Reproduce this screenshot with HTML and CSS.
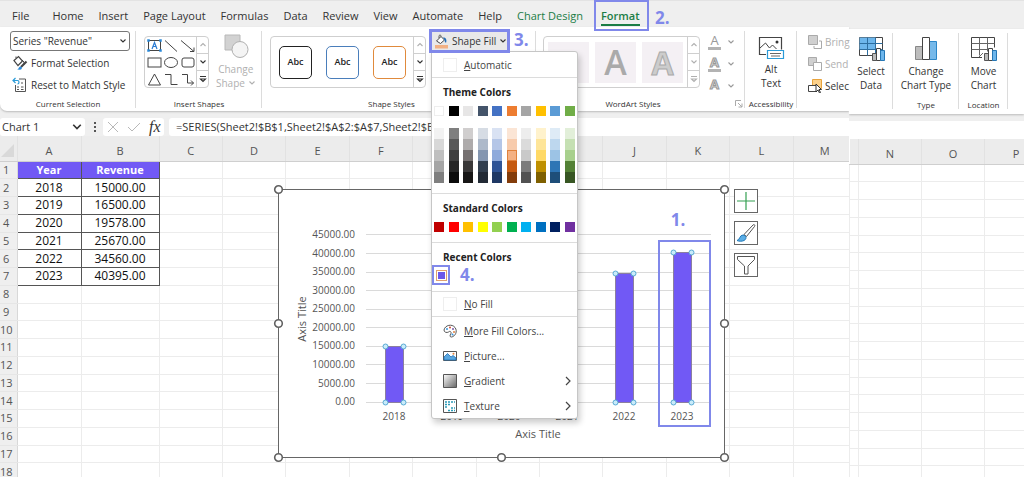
FILE: index.html
```html
<!DOCTYPE html>
<html lang="en">
<head>
<meta charset="utf-8">
<title>Sheet2 - Format chart</title>
<link rel="stylesheet" href="styles.css">
</head>
<body>
<svg width="0" height="0" class="defs" aria-hidden="true">
  <symbol id="down" viewBox="0 0 8 8"><path d="M1.5 2.5 4 5l2.5-2.5" fill="none" stroke="currentColor" stroke-width="1.1"/></symbol>
  <symbol id="up" viewBox="0 0 8 8"><path d="M1.5 5 4 2.5 6.5 5" fill="none" stroke="currentColor" stroke-width="1.1"/></symbol>
  <symbol id="more" viewBox="0 0 8 8"><path d="M1 1.5h6M1.5 4 4 6.5 6.5 4z" fill="none" stroke="currentColor" stroke-width="1.1"/></symbol>
  <symbol id="right" viewBox="0 0 8 12"><path d="M2 2l4 4-4 4" fill="none" stroke="#444" stroke-width="1.2"/></symbol>
</svg>
<div class="app">
  <nav class="tabs">
    <button class="tab tab-file">File</button>
    <button class="tab">Home</button>
    <button class="tab">Insert</button>
    <button class="tab">Page Layout</button>
    <button class="tab">Formulas</button>
    <button class="tab">Data</button>
    <button class="tab">Review</button>
    <button class="tab">View</button>
    <button class="tab">Automate</button>
    <button class="tab">Help</button>
    <button class="tab green">Chart Design</button>
    <button class="tab active"><span class="tab-text">Format</span><span class="step step-2">2.</span></button>
  </nav>
  <main class="panes">
    <section class="pane pane-left">
      <div class="ribbon">
        <div class="group">
          <div class="body selection">
            <label class="series"><select aria-label="Chart element"><option>Series "Revenue"</option></select><svg width="8" height="8"><use href="#down"/></svg></label>
            <button class="command"><svg width="16" height="16" viewBox="0 0 16 16"><path d="M2 5.5 6.5 1.5l4 4.5-4.500 4.500z" fill="#fff" stroke="#444" stroke-width="1.200"/><path d="M4 3V1.500M10 5l2 2v3" fill="none" stroke="#444"/><path d="M14.500 6.500 9 12" stroke="#444" stroke-width="2.200"/><path d="M5 14.500c2 0 1.500-3 3.500-3s2 3-.5 3.300z" fill="#2b88d8"/></svg>Format Selection</button>
            <button class="command"><svg width="16" height="16" viewBox="0 0 16 16"><path d="M7 2h6.500v12.500H3.500V8" fill="#fff" stroke="#555"/><path d="M5 10h2M5 12.500h2M9 6h2M9 10h2.500M9 12.500h2.500" stroke="#555"/><path d="M1 3.500h4.500c2 0 2 3.500 0 3.500M3.500 1 1 3.500 3.500 6" fill="none" stroke="#2b9bd8" stroke-width="1.200"/></svg>Reset to Match Style</button>
          </div>
          <h2 class="caption">Current Selection</h2>
        </div>
        <div class="group">
          <div class="body insert">
            <div class="gallery">
              <svg class="shapes" width="51" height="50" viewBox="0 0 51 50" fill="none" stroke="#444"><rect x="3.500" y="3.500" width="12" height="10" stroke="#444"/><path d="M7 12 9.500 5.500 12 12M8 9.500h3" stroke="#2b7cd3" stroke-width="1.200"/><path d="M2.500 2.500h2v2h-2zM14.500 2.500h2v2h-2zM2.500 12.500h2v2h-2zM14.500 12.500h2v2h-2z" stroke="#2b88d8" fill="#2b88d8" stroke-width=".5"/><path d="M20 3.500 32 14.500M36 3.500 49 14.500M49 10.500v4h-4"/><rect x="3" y="21" width="13" height="9"/><ellipse cx="26" cy="25.500" rx="6.500" ry="5"/><rect x="37" y="21" width="12" height="9" rx="2"/><path d="M9.500 37 15.500 48h-12zM20 37.500h6v10h6.500M37 37.500h5.500v8.500h6M46 43.500l2.500 2.500-2.500 2.500"/></svg>
              <div class="spin"><button class="dim" aria-label="Previous shapes"><svg width="8" height="8"><use href="#up"/></svg></button><button aria-label="Next shapes"><svg width="8" height="8"><use href="#down"/></svg></button><button aria-label="All shapes"><svg width="8" height="8"><use href="#more"/></svg></button></div>
            </div>
            <button class="big dim"><svg width="26" height="26" viewBox="0 0 26 26"><path d="M2 2h15v15H2z" fill="#d2d2d2" stroke="#b8b8b8"/><circle cx="17" cy="16.500" r="8" fill="#f4f4f4" stroke="#b0b0b0"/></svg><span>Change<br>Shape <svg width="8" height="8"><use href="#down"/></svg></span></button>
          </div>
          <h2 class="caption">Insert Shapes</h2>
        </div>
        <div class="group launcher-room">
          <div class="body styles">
            <div class="gallery">
              <div class="presets"><button class="preset">Abc</button><button class="preset blue">Abc</button><button class="preset orange">Abc</button></div>
              <div class="spin"><button class="dim" aria-label="Previous styles"><svg width="8" height="8"><use href="#up"/></svg></button><button aria-label="Next styles"><svg width="8" height="8"><use href="#down"/></svg></button><button aria-label="All styles"><svg width="8" height="8"><use href="#more"/></svg></button></div>
            </div>
            <div class="fill">
              <button class="fill-button"><svg width="15" height="15" viewBox="0 0 15 15"><path d="M2.500 7 7 2.500l3.500 3.500L6.500 9.500z" fill="#fff" stroke="#444"/><path d="M5 4V2.500c0-2 2-2 2 0" fill="none" stroke="#444" stroke-width=".9"/><path d="M9 3.500c3 0 4 2 3 5.500-1.500-1-1.500-3-1.500-3" fill="#2470b8"/><path d="M1 11h13v3.500H1z" fill="#f2b183"/></svg>Shape Fill<svg width="8" height="8"><use href="#down"/></svg></button>
              <span class="step step-3">3.</span>
              <div class="menu">
                <button class="item auto"><i class="blank"></i><span><u>A</u>utomatic</span></button>
                <h3>Theme Colors</h3>
                <div class="colors">
                  <i class="white"></i><i style="background:#000"></i><i style="background:#e7e6e6"></i><i style="background:#44546a"></i><i style="background:#4472c4"></i><i style="background:#ed7d31"></i><i style="background:#a5a5a5"></i><i style="background:#ffc000"></i><i style="background:#5b9bd5"></i><i style="background:#70ad47"></i>
                </div>
                <div class="colors tints">
                  <i style="background:#f2f2f2"></i><i style="background:#7f7f7f"></i><i style="background:#d0cece"></i><i style="background:#d6dce4"></i><i style="background:#d9e2f3"></i><i style="background:#fbe5d5"></i><i style="background:#ededed"></i><i style="background:#fff2cc"></i><i style="background:#deebf6"></i><i style="background:#e2efd9"></i>
                  <i style="background:#d8d8d8"></i><i style="background:#595959"></i><i style="background:#aeabab"></i><i style="background:#adb9ca"></i><i style="background:#b4c6e7"></i><i style="background:#f7cbac"></i><i style="background:#dbdbdb"></i><i style="background:#fee599"></i><i style="background:#bdd7ee"></i><i style="background:#c5e0b3"></i>
                  <i style="background:#bfbfbf"></i><i style="background:#3f3f3f"></i><i style="background:#757070"></i><i style="background:#8496b0"></i><i style="background:#8eaadb"></i><i class="picked" style="background:#f4b183"></i><i style="background:#c9c9c9"></i><i style="background:#ffd965"></i><i style="background:#9cc3e5"></i><i style="background:#a8d08d"></i>
                  <i style="background:#a5a5a5"></i><i style="background:#262626"></i><i style="background:#3a3838"></i><i style="background:#323f4f"></i><i style="background:#2f5496"></i><i style="background:#c55a11"></i><i style="background:#7b7b7b"></i><i style="background:#bf9000"></i><i style="background:#2e75b5"></i><i style="background:#538135"></i>
                  <i style="background:#7f7f7f"></i><i style="background:#0c0c0c"></i><i style="background:#171616"></i><i style="background:#222a35"></i><i style="background:#1f3864"></i><i style="background:#833c0b"></i><i style="background:#525252"></i><i style="background:#7f6000"></i><i style="background:#1e4e79"></i><i style="background:#375623"></i>
                </div>
                <h3 class="ruled">Standard Colors</h3>
                <div class="colors">
                  <i style="background:#c00000"></i><i style="background:#f00"></i><i style="background:#ffc000"></i><i style="background:#ff0"></i><i style="background:#92d050"></i><i style="background:#00b050"></i><i style="background:#00b0f0"></i><i style="background:#0070c0"></i><i style="background:#002060"></i><i style="background:#7030a0"></i>
                </div>
                <h3 class="ruled">Recent Colors</h3>
                <div class="recent"><button class="recent-color" aria-label="Purple"><i></i></button><span class="step">4.</span></div>
                <button class="item none"><i class="blank"></i><span><u>N</u>o Fill</span></button>
                <div class="choices">
                  <button class="item"><svg width="14" height="14" viewBox="0 0 14 14"><path d="M1 6c1-5 8-6.500 11-2.500 3 4 0 9-3.500 9.500-2 .2-1.500-2-.8-3C9 8 7 6.500 5.500 8 4 9 1 8.500 1 6z" fill="#fff" stroke="#555"/><circle cx="4" cy="5" r="1" fill="#3a96dd"/><circle cx="7" cy="3.500" r="1" fill="#d04a3a"/><circle cx="10" cy="5" r="1" fill="#7a58a8"/><circle cx="11" cy="8" r="1" fill="#e08040"/><circle cx="9.500" cy="10.500" r="1" fill="#3a96dd"/></svg><span><u>M</u>ore Fill Colors...</span></button>
                  <button class="item"><svg width="14" height="14" viewBox="0 0 14 14"><path d="M.5 2.500h13v9H.5z" fill="#fff" stroke="#555"/><path d="M1 11V8l3.500-3.500L8 8l2-1.500 3 2.500v2z" fill="#5aa7e0" stroke="#1f6fb5" stroke-width=".8"/><circle cx="10.500" cy="4.800" r="1" fill="#e8833a"/></svg><span><u>P</u>icture...</span></button>
                  <button class="item"><svg width="14" height="14" viewBox="0 0 14 14"><defs><linearGradient id="grey" x2="1" y2="1"><stop stop-color="#fff"/><stop offset="1" stop-color="#666"/></linearGradient></defs><path d="M.5.5h13v13H.5z" fill="url(#grey)" stroke="#555"/></svg><span><u>G</u>radient</span><svg class="open" width="8" height="12"><use href="#right"/></svg></button>
                  <button class="item"><svg width="14" height="14" viewBox="0 0 14 14"><path d="M.5.5h13v13H.5z" fill="#fff" stroke="#555"/><path d="M2 3h10M2 5.500h5M2 8h3M5 11.500h7M8 9h4" stroke="#2b9bb8" stroke-width="1.500" stroke-dasharray="2 1"/></svg><span><u>T</u>exture</span><svg class="open" width="8" height="12"><use href="#right"/></svg></button>
                </div>
              </div>
            </div>
          </div>
          <h2 class="caption">Shape Styles</h2>
        </div>
        <div class="group launcher-room">
          <div class="body wordart">
            <div class="gallery dim">
              <div class="letters"><button class="letter">A</button><button class="letter solid">A</button><button class="letter outline">A</button></div>
              <div class="spin"><button aria-label="Previous WordArt"><svg width="8" height="8"><use href="#up"/></svg></button><button aria-label="Next WordArt"><svg width="8" height="8"><use href="#down"/></svg></button><button aria-label="All WordArt"><svg width="8" height="8"><use href="#more"/></svg></button></div>
            </div>
            <div class="text-tools">
              <button><b class="plain bar">A</b><svg width="8" height="8"><use href="#down"/></svg></button>
              <button><b class="hollow bar">A</b><svg width="8" height="8"><use href="#down"/></svg></button>
              <button><b class="hollow">A</b><svg width="8" height="8"><use href="#down"/></svg></button>
            </div>
          </div>
          <h2 class="caption">WordArt Styles</h2>
          <svg class="launcher" width="8" height="8" viewBox="0 0 8 8"><path d="M.5 6V.5H6M3 3l4 4M7 3.500V7H3.500" fill="none" stroke="#aaa"/></svg>
        </div>
        <div class="group">
          <div class="body centred">
            <button class="big alt"><svg width="28" height="25" viewBox="0 0 28 25"><path d="M9 19.500H2.500v-17h22v12" fill="#fff" stroke="#444" stroke-width="1.200"/><path d="M3 13 8.500 8l4 5 3-3 4 4" fill="none" stroke="#444"/><circle cx="20" cy="7" r="1.500" fill="#333"/><path d="M10.500 15.500h16v8h-16z" fill="#fff" stroke="#2b9bd8" stroke-width="1.200"/><path d="M13 18.500h11M14 21h9" stroke="#666"/></svg><span>Alt<br>Text</span></button>
          </div>
          <h2 class="caption">Accessibility</h2>
        </div>
        <div class="group">
          <div class="body arrange">
            <button class="command dim"><svg width="14" height="14" viewBox="0 0 14 14"><path d="M.5.500h9v9h-9z" fill="#d0d0d0" stroke="#aaa"/><path d="M11 6h2.500v7.500H6V11" fill="none" stroke="#aaa"/></svg>Bring</button>
            <button class="command dim"><svg width="14" height="14" viewBox="0 0 14 14"><path d="M.5.500h8v8h-8z" fill="#d0d0d0" stroke="#aaa"/><path d="M5.500 5.500h8v8h-8z" fill="#fff" stroke="#aaa"/></svg>Send</button>
            <button class="command"><svg width="14" height="14" viewBox="0 0 14 14"><path d="M4.500.500h9v9h-9z" fill="#fbd08a" stroke="#e8a33d"/><path d="M.5 6.500h8v6h-8z" fill="#fff" stroke="#444"/><path d="M8 5v8l2-2 1.500 3 1-.5-1.500-3h2.500z" fill="#fff" stroke="#333"/></svg>Selec</button>
          </div>
        </div>
      </div>
      <div class="formula-bar">
        <label class="name-box"><select aria-label="Name box"><option>Chart 1</option></select><svg width="12" height="12"><use href="#down"/></svg></label>
        <svg class="dots" width="4" height="12" viewBox="0 0 4 12"><path d="M1 1h2v2H1zM1 5h2v2H1zM1 9h2v2H1z" fill="#555"/></svg>
        <div class="edit-tools"><svg width="12" height="12" viewBox="0 0 12 12"><path d="M1 1l10 10M11 1 1 11" stroke="#b8b8b8"/></svg><svg width="14" height="12" viewBox="0 0 14 12"><path d="M1 6l4 4 8-8" fill="none" stroke="#b8b8b8"/></svg><button class="fx" aria-label="Insert function">fx</button></div>
        <input class="formula" aria-label="Formula" value="=SERIES(Sheet2!$B$1,Sheet2!$A$2:$A$7,Sheet2!$B">
      </div>
      <div class="sheet">
        <table class="cells">
          <colgroup><col class="c-num"><col class="c-a"><col class="c-b"><col span="11"></colgroup>
          <thead><tr><th><svg width="14" height="14" viewBox="0 0 14 14"><path d="M14 0v13H1z" fill="#d9d9d9"/></svg></th><th>A</th><th>B</th><th>C</th><th>D</th><th>E</th><th>F</th><th>G</th><th>H</th><th>I</th><th>J</th><th>K</th><th>L</th><th>M</th></tr></thead>
          <tbody>
            <tr><th>1</th><td class="data head">Year</td><td class="data head">Revenue</td><td></td><td></td><td></td><td></td><td></td><td></td><td></td><td></td><td></td><td></td><td></td></tr>
            <tr><th>2</th><td class="data">2018</td><td class="data">15000.00</td><td></td><td></td><td></td><td></td><td></td><td></td><td></td><td></td><td></td><td></td><td></td></tr>
            <tr><th>3</th><td class="data">2019</td><td class="data">16500.00</td><td></td><td></td><td></td><td></td><td></td><td></td><td></td><td></td><td></td><td></td><td></td></tr>
            <tr><th>4</th><td class="data">2020</td><td class="data">19578.00</td><td></td><td></td><td></td><td></td><td></td><td></td><td></td><td></td><td></td><td></td><td></td></tr>
            <tr><th>5</th><td class="data">2021</td><td class="data">25670.00</td><td></td><td></td><td></td><td></td><td></td><td></td><td></td><td></td><td></td><td></td><td></td></tr>
            <tr><th>6</th><td class="data">2022</td><td class="data">34560.00</td><td></td><td></td><td></td><td></td><td></td><td></td><td></td><td></td><td></td><td></td><td></td></tr>
            <tr><th>7</th><td class="data">2023</td><td class="data">40395.00</td><td></td><td></td><td></td><td></td><td></td><td></td><td></td><td></td><td></td><td></td><td></td></tr>
            <tr><th>8</th><td></td><td></td><td></td><td></td><td></td><td></td><td></td><td></td><td></td><td></td><td></td><td></td><td></td></tr>
            <tr><th>9</th><td></td><td></td><td></td><td></td><td></td><td></td><td></td><td></td><td></td><td></td><td></td><td></td><td></td></tr>
            <tr><th>10</th><td></td><td></td><td></td><td></td><td></td><td></td><td></td><td></td><td></td><td></td><td></td><td></td><td></td></tr>
            <tr><th>11</th><td></td><td></td><td></td><td></td><td></td><td></td><td></td><td></td><td></td><td></td><td></td><td></td><td></td></tr>
            <tr><th>12</th><td></td><td></td><td></td><td></td><td></td><td></td><td></td><td></td><td></td><td></td><td></td><td></td><td></td></tr>
            <tr><th>13</th><td></td><td></td><td></td><td></td><td></td><td></td><td></td><td></td><td></td><td></td><td></td><td></td><td></td></tr>
            <tr><th>14</th><td></td><td></td><td></td><td></td><td></td><td></td><td></td><td></td><td></td><td></td><td></td><td></td><td></td></tr>
            <tr><th>15</th><td></td><td></td><td></td><td></td><td></td><td></td><td></td><td></td><td></td><td></td><td></td><td></td><td></td></tr>
            <tr><th>16</th><td></td><td></td><td></td><td></td><td></td><td></td><td></td><td></td><td></td><td></td><td></td><td></td><td></td></tr>
            <tr><th>17</th><td></td><td></td><td></td><td></td><td></td><td></td><td></td><td></td><td></td><td></td><td></td><td></td><td></td></tr>
            <tr><th>18</th><td></td><td></td><td></td><td></td><td></td><td></td><td></td><td></td><td></td><td></td><td></td><td></td><td></td></tr>
          </tbody>
        </table>
        <div class="chart">
          <svg width="447" height="270" viewBox="0 0 447 270" role="img" aria-label="Revenue by year">
            <rect x=".5" y=".5" width="446" height="268" fill="#fff" stroke="#666"/>
            <path d="M88 45.500h345M88 64.500h345M88 83.500h345M88 101.500h345M88 120.500h345M88 138.500h345M88 157.500h345M88 175.500h345M88 194.500h345M88 213.500h345" stroke="#dadada"/>
            <g class="axis end"><text x="77" y="49">45000.00</text><text x="77" y="68">40000.00</text><text x="77" y="86">35000.00</text><text x="77" y="105">30000.00</text><text x="77" y="123">25000.00</text><text x="77" y="142">20000.00</text><text x="77" y="160">15000.00</text><text x="77" y="179">10000.00</text><text x="77" y="198">5000.00</text><text x="77" y="216">0.00</text></g>
            <g class="axis"><text x="116" y="231">2018</text><text x="174" y="231">2019</text><text x="231" y="231">2020</text><text x="289" y="231">2021</text><text x="346" y="231">2022</text><text x="404" y="231">2023</text></g>
            <g class="axis title"><text x="260" y="249">Axis Title</text><text transform="translate(28 130) rotate(-90)">Axis Title</text></g>
            <g fill="#7159f5" stroke="#8b7f9f"><path d="M107.500 157.500h18v56h-18zM165.500 152.500h18v61h-18zM222.500 140.500h18v73h-18zM280.500 118.500h18v95h-18zM337.500 84.500h18v129h-18zM395.500 63.500h18v150h-18z"/></g>
            <g fill="#c9ebfa" stroke="#4ba3cf" stroke-width=".9"><circle cx="107.500" cy="157.500" r="2.500"/><circle cx="125.500" cy="157.500" r="2.500"/><circle cx="107.500" cy="213.500" r="2.500"/><circle cx="125.500" cy="213.500" r="2.500"/><circle cx="337.500" cy="84.500" r="2.500"/><circle cx="355.500" cy="84.500" r="2.500"/><circle cx="337.500" cy="213.500" r="2.500"/><circle cx="355.500" cy="213.500" r="2.500"/><circle cx="395.500" cy="63.500" r="2.500"/><circle cx="413.500" cy="63.500" r="2.500"/><circle cx="395.500" cy="213.500" r="2.500"/><circle cx="413.500" cy="213.500" r="2.500"/></g>
            <rect x="381" y="52" width="51" height="185" fill="none" stroke="#8088ea" stroke-width="2"/>
            <text class="step-svg" x="400" y="37">1.</text>
            <g fill="#fff" stroke="#606060" stroke-width="1.600"><circle cx=".5" cy=".5" r="3.800"/><circle cx=".5" cy="134.500" r="3.800"/><circle cx=".5" cy="268.500" r="3.800"/><circle cx="223.500" cy=".5" r="3.800"/><circle cx="223.500" cy="268.500" r="3.800"/><circle cx="446.500" cy=".5" r="3.800"/><circle cx="446.500" cy="134.500" r="3.800"/><circle cx="446.500" cy="268.500" r="3.800"/></g>
          </svg>
          <div class="chart-tools">
            <button aria-label="Chart elements"><svg width="22" height="22" viewBox="0 0 22 22"><path d="M11 2v18M2 11h18" stroke="#35a052" stroke-width="1.200"/></svg></button>
            <button aria-label="Chart styles"><svg width="22" height="22" viewBox="0 0 22 22"><path d="M9 12.500 18 3c1-1 2.500 0 1.500 1.500L11.500 14.500z" fill="#fff" stroke="#555"/><path d="M2 18.500c3-.5 2.500-5.500 6-5.500 3.500.5 4 4 1 5.500-2 1-5 1-7 0z" fill="#5baee6" stroke="#1f78b8"/></svg></button>
            <button aria-label="Chart filters"><svg width="22" height="22" viewBox="0 0 22 22"><path d="M2.500 2.500h17v3L13 12v8H9.500v-8L2.500 5.500z" fill="#fff" stroke="#555"/></svg></button>
          </div>
        </div>
      </div>
    </section>
    <section class="pane pane-right">
      <div class="ribbon">
        <div class="group">
          <div class="body centred"><button class="big"><svg width="27" height="26" viewBox="0 0 27 26"><path d="M1.500 1.500h23v18h-23z" fill="#fff" stroke="#444"/><path d="M1.500 1.500h16v12h-16z" fill="#6db6ec"/><path d="M9.500 1.500v18M17.500 1.500v18M1.500 7.500h23M1.500 13.500h23" stroke="#2d6ea0"/><path d="M14.500 17.500h4v7h-4z" fill="#bbb" stroke="#555"/><path d="M18.500 12.500h4v12h-4z" fill="#fff" stroke="#444"/><path d="M22.500 14.500h4v10h-4z" fill="#6db6ec" stroke="#2577b5"/></svg><span>Select<br>Data</span></button></div>
        </div>
        <div class="group">
          <div class="body centred"><button class="big"><svg width="24" height="26" viewBox="0 0 24 26"><path d="M1.500 10.500h7v13h-7z" fill="#bdbdbd" stroke="#888"/><path d="M15.500 5.500h7v18h-7z" fill="#76b9ea" stroke="#2d87c8"/><path d="M8.500 1.500h7v22h-7z" fill="#fff" stroke="#444"/></svg><span>Change<br>Chart Type</span></button></div>
          <h2 class="caption">Type</h2>
        </div>
        <div class="group">
          <div class="body centred"><button class="big"><svg width="27" height="26" viewBox="0 0 27 26"><path d="M12 21.500H1.500v-20h23v10" fill="#fff" stroke="#444"/><path d="M9.500 1.500v18M17.500 1.500v14M1.500 7.500h23M1.500 13.500h17M9 21l4-4" stroke="#666"/><path d="M14.500 17.500h4v7h-4z" fill="#bbb" stroke="#555"/><path d="M18.500 12.500h4v12h-4z" fill="#fff" stroke="#444"/><path d="M22.500 14.500h4v10h-4z" fill="#6db6ec" stroke="#2577b5"/></svg><span>Move<br>Chart</span></button></div>
          <h2 class="caption">Location</h2>
        </div>
      </div>
      <div class="formula-bar"></div>
      <div class="sheet">
        <table class="cells">
          <colgroup><col class="c-edge"><col span="3"></colgroup>
          <thead><tr><th></th><th>N</th><th>O</th><th>P</th></tr></thead>
          <tbody>
            <tr><td></td><td></td><td></td><td></td></tr><tr><td></td><td></td><td></td><td></td></tr><tr><td></td><td></td><td></td><td></td></tr>
            <tr><td></td><td></td><td></td><td></td></tr><tr><td></td><td></td><td></td><td></td></tr><tr><td></td><td></td><td></td><td></td></tr>
            <tr><td></td><td></td><td></td><td></td></tr><tr><td></td><td></td><td></td><td></td></tr><tr><td></td><td></td><td></td><td></td></tr>
            <tr><td></td><td></td><td></td><td></td></tr><tr><td></td><td></td><td></td><td></td></tr><tr><td></td><td></td><td></td><td></td></tr>
            <tr><td></td><td></td><td></td><td></td></tr><tr><td></td><td></td><td></td><td></td></tr><tr><td></td><td></td><td></td><td></td></tr>
            <tr><td></td><td></td><td></td><td></td></tr><tr><td></td><td></td><td></td><td></td></tr><tr><td></td><td></td><td></td><td></td></tr>
          </tbody>
        </table>
      </div>
    </section>
  </main>
</div>
</body>
</html>
```
FILE: styles.css
```css
* { box-sizing: border-box; }
body { margin: 0; background: #fff; color: #333; font: 10px/14px "Open Sans", "Noto Sans", sans-serif; }
button, select, input { margin: 0; padding: 0; border: 0; background: none; color: inherit; font: inherit; }
svg { display: block; flex: none; }
h2, h3 { margin: 0; font-weight: 400; }
.defs { position: absolute; }
.app { height: 100vh; overflow: hidden; display: flex; flex-direction: column; background: #efefef; }

.tabs { display: flex; align-items: center; gap: 15px; height: 27px; flex: none; padding: 3px 12px 0; border-top: 1px solid #e3e3e3; font-size: 11px; }
.tab { white-space: nowrap; }
.tab-file { margin-right: 8px; }
.green { color: #1b7d46; }
.active { position: relative; margin-left: 3px; color: #1b7d46; font-weight: 600; }
.tab-text { display: block; border-bottom: 2px solid #1b7d46; line-height: 17px; margin-top: 2px; }
.active::before { content: ""; position: absolute; inset: -5px -9px -5px -7px; border: 2px solid #8088ea; z-index: 3; }
.step { color: #8088ea; font-size: 17px; font-weight: 700; line-height: 20px; }
.step-2 { position: absolute; left: 54px; top: 3px; z-index: 3; }
.step-3 { position: absolute; left: 85px; top: 1px; }

.panes { flex: 1; min-height: 0; display: grid; grid-template-columns: minmax(0, 849fr) minmax(0, 175fr); }
.pane { display: flex; flex-direction: column; min-width: 0; }
.pane-right { padding-top: 2px; overflow: hidden; }
.ribbon { display: grid; grid-template-columns: 136fr 126fr 274fr 209fr 52fr 52fr; height: 84px; flex: none; background: #fff; border-bottom-left-radius: 7px; box-shadow: 0 1px 2px #bbb; }
.pane-right .ribbon { grid-template-columns: 44fr 66fr 49fr 16fr; height: 85px; border-radius: 0; }
.group { position: relative; display: flex; flex-direction: column; min-width: 0; padding: 4px 0 2px; }
.group::after { content: ""; position: absolute; right: 0; top: 4px; bottom: 5px; border-right: 1px solid #dcdcdc; }
.pane-left .group:last-child::after { display: none; }
.body { flex: 1; min-height: 0; display: flex; }
.caption { font-size: 8px; text-align: center; white-space: nowrap; }
.launcher-room .caption { padding-right: 15px; }
.launcher { position: absolute; right: 2px; bottom: 5px; }
.dim { color: #b0b0b0; }

.selection { flex-direction: column; padding: 0 6px 0 10px; }
.series { position: relative; display: flex; align-items: center; height: 20px; border: 1px solid #777; border-radius: 3px; margin-bottom: 1px; }
.series select, .name-box select { appearance: none; flex: 1; min-width: 0; padding-left: 2px; }
.series svg { margin-right: 2px; }
.command { display: flex; align-items: center; gap: 3px; height: 22px; white-space: nowrap; padding-left: 2px; }
.insert { padding: 5px 8px 0; gap: 7px; }
.gallery { display: flex; height: 52px; border: 1px solid #cfcfcf; border-radius: 4px; }
.spin { display: flex; flex-direction: column; width: 12px; }
.spin button { flex: 1; display: grid; place-items: center; border-left: 1px solid #cfcfcf; }
.spin button + button { border-top: 1px solid #cfcfcf; }
.big { display: flex; flex-direction: column; align-items: center; gap: 2px; height: 60px; line-height: 14px; white-space: nowrap; }
.insert .big { margin-top: -3px; gap: 3px; }
.big span svg { display: inline; }
.styles { padding: 5px 8px 0; }
.presets { display: flex; align-items: center; gap: 14px; padding: 0 7px 0 8px; }
.preset { width: 33px; height: 33px; border: 1px solid #222; border-radius: 5px; font-size: 9px; font-weight: 600; color: #222; }
.blue { border-color: #4a7ebb; }
.orange { border-color: #e08a3c; }
.centred { justify-content: center; padding-top: 4px; }
.pane-right .centred { padding-top: 3px; }
.wordart { padding: 5px 7px 0; gap: 8px; }
.letters { display: flex; align-items: center; gap: 6px; padding: 0 4px; }
.letter { width: 41px; height: 41px; background: #f4f0f4; color: #aaa; font-size: 28px; line-height: 41px; }
.solid { font-weight: 600; font-size: 34px; }
.outline { font-weight: 700; font-size: 32px; color: #ccc; -webkit-text-stroke: 1px #aaa; }
.text-tools { display: flex; flex-direction: column; margin-top: -5px; }
.text-tools button { display: flex; align-items: center; gap: 6px; height: 22px; color: #999; }
.text-tools b { width: 13px; font-size: 13px; line-height: 13px; text-align: center; border-bottom: 3px solid transparent; }
.text-tools .bar { border-bottom-color: #b3b3b3; }
.text-tools .plain { font-weight: 400; }
.hollow { color: #ddd; -webkit-text-stroke: 1px #999; }
.arrange { flex-direction: column; padding: 0 0 0 9px; }

.fill { position: relative; z-index: 4; margin: -7px 0 0 3px; height: 24px; }
.fill-button { display: flex; align-items: center; gap: 3px; width: 81px; height: 24px; padding: 0 2px; border: 3px solid #8088ea; background: #e9e9e9; white-space: nowrap; }
.menu { position: absolute; left: 2px; top: 22px; width: 147px; z-index: -1; background: #fff; border: 1px solid #c6c6c6; border-radius: 0 3px 3px 3px; box-shadow: 2px 4px 6px #0003; }
.item { display: flex; align-items: center; gap: 7px; width: 100%; height: 25px; padding: 0 5px 0 11px; text-align: left; color: #444; }
.auto { height: 26px; border-bottom: 1px solid #dcdcdc; }
.blank { width: 14px; height: 14px; border: 1px solid #eee; }
.open { margin-left: auto; }
.menu h3 { padding: 7px 11px 0; font-size: 10px; font-weight: 700; line-height: 15px; color: #222; }
.menu .ruled { margin-top: 10px; border-top: 1px solid #dcdcdc; }
.colors { display: grid; grid-template-columns: repeat(10, 1fr); justify-items: center; padding-top: 6px; }
.colors i { width: 10px; height: 10px; }
.white { border: 1px solid #eee; }
.tints { padding-top: 12px; }
.tints i { height: 11px; }
.tints .picked { outline: 1px solid #e0823c; outline-offset: -1px; }
.recent { display: flex; gap: 10px; height: 26px; }
.recent-color { width: 18px; height: 20px; border: 2px solid #8088ea; display: grid; place-items: center; }
.recent-color i { width: 11px; height: 11px; background: #6b57ea; border: 1px solid #e0a070; box-shadow: inset 0 0 0 1px #fff; }
.none { border-top: 1px solid #dcdcdc; }
.choices { border-top: 1px solid #dcdcdc; padding-top: 1px; }

.formula-bar { display: flex; gap: 8px; height: 18px; margin-top: 7px; flex: none; font-size: 11px; }
.pane-right .formula-bar { background: #fff; }
.name-box { display: flex; align-items: center; width: 85px; background: #fff; border-radius: 3px; padding-right: 2px; }
.dots { align-self: center; }
.edit-tools { display: flex; align-items: center; gap: 8px; width: 61px; padding-left: 4px; background: #fff; border-radius: 3px; margin-left: -2px; }
.fx { font: italic 400 16px/16px "Liberation Serif", serif; }
.formula { flex: 1; min-width: 0; margin-left: -3px; padding-left: 7px; background: #fff; border-radius: 3px 0 0 3px; }

.sheet { position: relative; flex: 1; min-height: 0; background: #fff; clip-path: inset(0); }
.pane-left .cells { width: calc(100% + 8px); }
.pane-right .cells { width: calc(100% + 24px); }
.cells { table-layout: fixed; border-collapse: collapse; height: 345px; font-size: 11px; line-height: 14px; }
.cells thead tr { height: 25px; }
.cells th, .cells td { padding: 0; text-align: center; font-weight: 400; }
.cells td { border: 1px solid #ececec; color: #111; }
.cells th { background: #efefef; color: #555; }
.cells thead th { border-bottom: 1px solid #cfcfcf; border-right: 1px solid #e2e2e2; padding-top: 6px; background: #ececec; }
.cells tbody th { border-right: 1px solid #d8d8d8; border-bottom: 1px solid #e6e6e6; padding-right: 4px; }
.cells td.data { border: 1px solid #555; font-size: 12px; }
.cells td.head { background: #7159f5; color: #fff; font-size: 11px; font-weight: 700; }
.c-num { width: 17px; }
.c-a { width: 64px; }
.c-b { width: 78px; }
.c-edge { width: 9px; }

.chart { position: absolute; left: 278px; top: 53px; display: flex; gap: 9px; }
.chart > svg { overflow: visible; }
.axis { fill: #555; font-size: 10px; text-anchor: middle; }
.end { text-anchor: end; }
.title { font-size: 11px; }
.step-svg { fill: #8088ea; font-size: 17px; font-weight: 700; text-anchor: middle; }
.chart-tools { display: flex; flex-direction: column; gap: 8px; }
.chart-tools button { width: 24px; height: 24px; border: 1px solid #666; background: #fff; }
```
